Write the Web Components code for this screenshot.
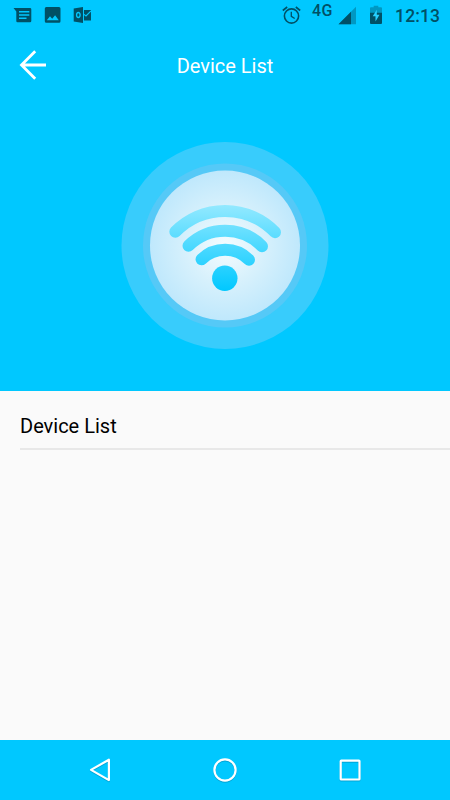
<!DOCTYPE html>
<html lang="en">
<head>
<meta charset="UTF-8">
<meta name="viewport" content="width=device-width, initial-scale=1">
<title>Device List</title>
<style>
  body {
    margin: 0;
    font-family: Roboto, sans-serif;
    background: #fafafa;
  }
</style>
</head>
<body>
<device-screen>
  <status-bar slot="top" network="4G" time="12:13"></status-bar>
  <title-bar slot="top">Device List</title-bar>
  <wifi-badge slot="top"></wifi-badge>
  <list-heading>Device List</list-heading>
  <nav-bar slot="bottom"></nav-bar>
</device-screen>

<script>
class DeviceScreen extends HTMLElement {
  constructor() {
    super();
    this.attachShadow({ mode: "open" });
  }

  connectedCallback() {
    this.shadowRoot.innerHTML = `
      <style>
        :host {
          display: flex;
          flex-direction: column;
          height: 100vh;
          overflow: hidden;
          background: #fafafa;
        }
        header {
          height: 391px;
          flex: none;
          display: flex;
          flex-direction: column;
          background: #00c8ff;
        }
        main { flex: 1; }
      </style>
      <header><slot name="top"></slot></header>
      <main><slot></slot></main>
      <slot name="bottom"></slot>
    `;
  }
}

class StatusBar extends HTMLElement {
  constructor() {
    super();
    this.attachShadow({ mode: "open" });
  }

  connectedCallback() {
    const network = this.getAttribute("network");
    const time = this.getAttribute("time");

    this.shadowRoot.innerHTML = `
      <style>
        :host {
          display: flex;
          height: 30px;
          box-sizing: border-box;
          padding: 0 10px 0 13px;
          align-items: center;
          justify-content: space-between;
          color: #005066;
        }
        div { display: flex; align-items: center; }
        svg { display: block; fill: currentColor; }
        .left { gap: 10.5px; }
        .network {
          font-size: 16px;
          line-height: 16px;
          font-weight: 500;
          letter-spacing: 0.6px;
          margin: 0 5px 8px 11px;
        }
        .time {
          font-size: 17.5px;
          line-height: 28px;
          font-weight: 500;
          letter-spacing: 0.1px;
          margin-left: 13px;
          padding-top: 2px;
        }
      </style>
      <div class="left">
        <svg width="19" height="18" viewBox="0 0 19 18">
          <path fill-rule="evenodd" d="M.5 2H17q1.300 0 1.300 1.300V15q0 1.300-1.300 1.300H4.500q-1.200 0-1.200-1.300V5.500ZM6 5v1.500h10.300V5ZM6 8.300v1.500h10.300V8.300ZM6 11.600v1.500h7.500v-1.500Z"/>
        </svg>
        <svg width="20" height="18" viewBox="0 0 20 18">
          <path fill-rule="evenodd" d="M3.300 1H16q1.500 0 1.500 1.500v12.800q0 1.500-1.500 1.500H3.300q-1.500 0-1.500-1.500V2.500Q1.800 1 3.300 1ZM3.800 14.300h12l-3.700-5-2.900 3.500L7 10.300Z"/>
        </svg>
        <svg width="19" height="18" viewBox="0 0 19 18">
          <path fill-rule="evenodd" d="M.7 2.500 10 .9v16.200L.7 15.500ZM5.300 5.800C3.700 5.800 2.900 7.200 2.900 9s.8 3.200 2.400 3.200S7.800 10.800 7.800 9 6.900 5.800 5.300 5.800ZM5.300 7.300c.7 0 1.100.7 1.100 1.700s-.4 1.700-1.100 1.700S4.300 10 4.300 9s.3-1.700 1-1.700Z"/>
          <path d="M11 4h7v10.500h-7Z"/>
          <path d="m11 8.400 2 1.600L18 4.800" fill="none" stroke="#00c8ff" stroke-width="1.100"/>
        </svg>
      </div>
      <div>
        <svg width="19" height="20" viewBox="0 0 19 20">
          <g fill="none" stroke="currentColor" stroke-width="1.600">
            <circle cx="9.500" cy="11" r="7.100"/>
            <path d="M.8 5.500 5.200 2M18.200 5.500 13.800 2"/>
            <path d="M9.300 6.800v4.500l3.400 2.200" stroke-width="1.300"/>
          </g>
        </svg>
        <span class="network">${network}</span>
        <svg width="18" height="20" viewBox="0 0 18 20">
          <path d="M.5 19.300 18 1.800v17.500Z" opacity=".4"/>
          <path d="M.5 19.300 13 6.800v12.500Z"/>
        </svg>
        <svg width="12" height="20" viewBox="0 0 12 20" style="margin-left: 14px">
          <path d="M0 3.300q0-1 1-1h2.700V.8h4.600v1.500H11q1 0 1 1v5H0Z" opacity=".4"/>
          <path d="M0 7.700h12V18q0 1-1 1H1q-1 0-1-1Z"/>
          <path d="M6.800 4.800 2.700 11.300h2.800v5.200l4-6.800H6.800Z" fill="#26cfff"/>
        </svg>
        <span class="time">${time}</span>
      </div>
    `;
  }
}

class TitleBar extends HTMLElement {
  constructor() {
    super();
    this.attachShadow({ mode: "open" });
  }

  connectedCallback() {
    this.shadowRoot.innerHTML = `
      <style>
        :host {
          display: grid;
          grid-template-columns: 50px 1fr 50px;
          align-items: center;
          height: 70px;
          color: #fff;
          font-size: 20px;
          line-height: 24px;
          text-align: center;
        }
        svg { display: block; margin-left: 19px; }
        span { padding-top: 2px; }
      </style>
      <svg width="28" height="30" viewBox="0 0 28 30" fill="none" stroke="#fff" stroke-width="2.800">
        <path d="M16.200 1.300 2.500 15l13.700 13.700M2.500 15H27"/>
      </svg>
      <span><slot></slot></span>
    `;
  }
}

class WifiBadge extends HTMLElement {
  constructor() {
    super();
    this.attachShadow({ mode: "open" });
  }

  connectedCallback() {
    this.shadowRoot.innerHTML = `
      <style>
        :host {
          display: flex;
          justify-content: center;
          padding-top: 40px;
        }
      </style>
      <svg width="210" height="210" viewBox="120 140 210 210">
        <defs>
          <radialGradient id="disc">
            <stop offset="0" stop-color="#f5fcff"/>
            <stop offset=".5" stop-color="#d8f1fc"/>
            <stop offset="1" stop-color="#bfe8fc"/>
          </radialGradient>
          <linearGradient id="signal" gradientUnits="userSpaceOnUse" x1="0" y1="205" x2="0" y2="291">
            <stop offset="0" stop-color="#93e9ff"/>
            <stop offset="1" stop-color="#00c8ff"/>
          </linearGradient>
        </defs>
        <circle cx="225" cy="245.500" r="103.500" fill="#38ccfc"/>
        <circle cx="225" cy="245.500" r="82" fill="#55c9f7"/>
        <circle cx="225" cy="245.500" r="75" fill="url(#disc)"/>
        <g fill="none" stroke="url(#signal)" stroke-width="12" stroke-linecap="round">
          <path d="M175.300 231.800A69.500 69.500 0 0 1 275 232.200"/>
          <path d="M188.500 245.800A52 52 0 0 1 262 246.200"/>
          <path d="M201.500 259.300A34 34 0 0 1 249 259.700"/>
        </g>
        <circle cx="224.800" cy="278.300" r="12.700" fill="url(#signal)"/>
      </svg>
    `;
  }
}

class ListHeading extends HTMLElement {
  constructor() {
    super();
    this.attachShadow({ mode: "open" });
  }

  connectedCallback() {
    this.shadowRoot.innerHTML = `
      <style>
        :host {
          display: block;
          margin-left: 20px;
          padding: 24px 0 10px;
          border-bottom: 2px solid #e8e8e8;
          color: #000;
          font-size: 20px;
          line-height: 23px;
        }
      </style>
      <slot></slot>
    `;
  }
}

class NavBar extends HTMLElement {
  constructor() {
    super();
    this.attachShadow({ mode: "open" });
  }

  connectedCallback() {
    this.shadowRoot.innerHTML = `
      <style>
        :host {
          display: flex;
          flex: none;
          height: 60px;
          align-items: center;
          justify-content: center;
          gap: 97px;
          background: #00c8ff;
        }
        svg {
          display: block;
          fill: none;
          stroke: #fff;
          stroke-width: 2.2;
          stroke-linejoin: round;
          filter: drop-shadow(0 1px 0.5px rgba(0, 60, 90, 0.25));
        }
      </style>
      <svg width="28" height="28" viewBox="0 0 28 28"><path d="M22.900 3.700v20.400L5 13.900Z"/></svg>
      <svg width="28" height="28" viewBox="0 0 28 28"><circle cx="14" cy="14" r="10.600"/></svg>
      <svg width="28" height="28" viewBox="0 0 28 28"><rect x="4.700" y="4.700" width="18.800" height="18.800" rx=".6"/></svg>
    `;
  }
}

customElements.define("device-screen", DeviceScreen);
customElements.define("status-bar", StatusBar);
customElements.define("title-bar", TitleBar);
customElements.define("wifi-badge", WifiBadge);
customElements.define("list-heading", ListHeading);
customElements.define("nav-bar", NavBar);
</script>
</body>
</html>
